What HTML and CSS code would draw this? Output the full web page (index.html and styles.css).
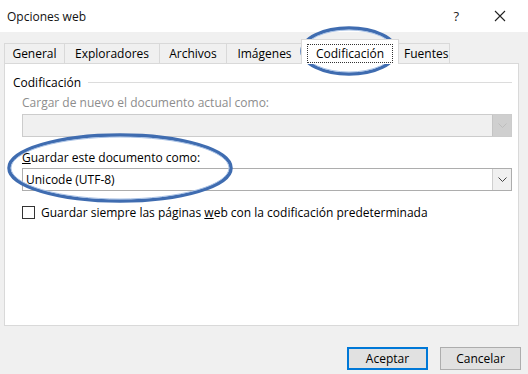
FILE: index.html
```html
<!DOCTYPE html>
<html lang="es">
<head>
  <meta charset="UTF-8">
  <title>Opciones web</title>
  <link rel="stylesheet" href="styles.css">
</head>
<body>

<header class="titlebar">
  <span class="title">Opciones web</span>
  <div class="controls">
    <span class="help">?</span>
    <svg class="close" width="12" height="12" viewBox="0 0 12 12">
      <path d="M1 1 L11 11 M11 1 L1 11" stroke="#222" stroke-width="1.1" fill="none"/>
    </svg>
  </div>
</header>

<main class="dialog">
  <div class="tabs">
    <span class="tab">General</span>
    <span class="tab">Exploradores</span>
    <span class="tab">Archivos</span>
    <span class="tab">Imágenes</span>
    <span class="tab active"><span class="focus">Codificación</span></span>
    <span class="tab">Fuentes</span>
  </div>

  <div class="panel">
    <div class="group-title">
      <span>Codificación</span>
      <span class="rule"></span>
    </div>

    <div class="group-body">
      <p class="label disabled">Cargar de nuevo el documento actual como:</p>
      <div class="combo combo-disabled">
        <span class="value"></span>
        <span class="arrow">
          <svg width="9" height="5" viewBox="0 0 9 5"><path d="M0.5 0.5 L4.5 4.5 L8.5 0.5" stroke="#bdbdbd" fill="none"/></svg>
        </span>
      </div>

      <p class="label second"><u>G</u>uardar este documento como:</p>
      <div class="combo">
        <span class="value">Unicode (UTF-8)</span>
        <span class="arrow">
          <svg width="9" height="5" viewBox="0 0 9 5"><path d="M0.5 0.5 L4.5 4.5 L8.5 0.5" stroke="#444" fill="none"/></svg>
        </span>
      </div>

      <label class="check">
        <span class="box"></span>
        <span>Guardar siempre las páginas <u>w</u>eb con la codificación predeterminada</span>
      </label>
    </div>
  </div>

  <div class="buttons">
    <button class="default">Aceptar</button>
    <button>Cancelar</button>
  </div>
</main>

<!-- hand-drawn highlight rings over the screenshot -->
<svg class="marks" width="528" height="374" viewBox="0 0 528 374">
  <ellipse cx="349" cy="51" rx="47" ry="23" class="ring"/>
  <ellipse cx="349" cy="51" rx="45" ry="21" class="ring-inner"/>
  <ellipse cx="120" cy="168" rx="111" ry="33" class="ring"/>
  <ellipse cx="120" cy="168" rx="109" ry="31" class="ring-inner"/>
</svg>

</body>
</html>
```

FILE: styles.css
```css
body {
  margin: 0;
  width: 528px;
  height: 374px;
  overflow: hidden;
  position: relative;
  font-family: "Open Sans", "Noto Sans", sans-serif;
  font-size: 12px;
  background-color: #f0f0f0;
  color: #000;
}

.titlebar {
  height: 32px;
  background-color: #fff;
  display: flex;
  align-items: center;
  justify-content: space-between;
  padding: 0 0 0 7px;
}

.title {
  font-size: 12px;
  color: #111;
}

.controls {
  display: flex;
  align-items: center;
  gap: 35px;
  padding-right: 22px;
}

.help {
  font-size: 13px;
  color: #222;
}

.dialog {
  padding: 7px 0 0 4px;
}

.tabs {
  display: flex;
  align-items: flex-end;
  height: 24px;
}

.tab {
  height: 20px;
  line-height: 20px;
  padding: 0 7px;
  border: 1px solid #d9d9d9;
  border-bottom: none;
  border-left: none;
  box-sizing: border-box;
  background-color: #f0f0f0;
  color: #000;
  text-align: center;
}

.tab:nth-child(1) { width: 61px; border-left: 1px solid #d9d9d9; }
.tab:nth-child(2) { width: 95px; }
.tab:nth-child(3) { width: 67px; }
.tab:nth-child(4) { width: 76px; }
.tab:nth-child(6) { width: 53px; }

.tab.active {
  width: 98px;
  height: 25px;
  background-color: #fff;
  border-left: 1px solid #d9d9d9;
  margin: 0 -2px -1px -2px;
  padding: 4px 5px 0;
  position: relative;
  z-index: 1;
}

.focus {
  display: block;
  height: 19px;
  line-height: 17px;
  box-sizing: border-box;
  border: 1px dotted #333;
}

.panel {
  width: 515px;
  height: 263px;
  box-sizing: border-box;
  background-color: #fff;
  border: 1px solid #d9d9d9;
  padding: 10px 6px 0 8px;
}

.group-title {
  display: flex;
  align-items: center;
  gap: 7px;
  height: 16px;
}

.rule {
  flex: 1;
  border-top: 1px solid #dcdcdc;
}

.group-body {
  padding-left: 9px;
}

.label {
  margin: 5px 0 0 0;
  height: 16px;
  line-height: 16px;
}

.label.second {
  margin-top: 13px;
}

.disabled {
  color: #8d8d8d;
}

.combo {
  margin-top: 3px;
  height: 23px;
  box-sizing: border-box;
  border: 1px solid #adadad;
  background-color: #fff;
  display: flex;
  align-items: stretch;
}

.label.second + .combo {
  margin-top: 2px;
}

.combo .value {
  flex: 1;
  line-height: 21px;
  padding-left: 3px;
}

.combo .arrow {
  width: 18px;
  display: flex;
  align-items: center;
  justify-content: center;
  background-color: #f0f0f0;
  border-left: 1px solid #cfcfcf;
}

.combo-disabled {
  background-color: #f0f0f0;
  border-color: #cccccc;
}

.combo-disabled .arrow {
  background-color: #cfcfcf;
  border-left-color: #c4c4c4;
}

.check {
  display: flex;
  align-items: center;
  gap: 6px;
  margin-top: 13px;
  height: 16px;
}

.box {
  width: 13px;
  height: 13px;
  box-sizing: border-box;
  border: 1px solid #333;
  background-color: #fff;
}

.buttons {
  display: flex;
  justify-content: flex-end;
  gap: 12px;
  padding: 21px 7px 0 0;
}

button {
  width: 81px;
  height: 23px;
  font-family: inherit;
  font-size: 12px;
  background-color: #e1e1e1;
  border: 1px solid #adadad;
  color: #000;
  padding: 0;
}

button.default {
  border: 2px solid #0078d7;
}

.marks {
  position: absolute;
  left: 0;
  top: 0;
  pointer-events: none;
}

.ring {
  fill: none;
  stroke: #3f6cb0;
  stroke-width: 3.5;
}

.ring-inner {
  fill: none;
  stroke: #a9c2e6;
  stroke-width: 1;
}
```
